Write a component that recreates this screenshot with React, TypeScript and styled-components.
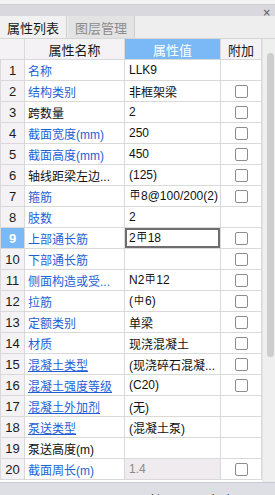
import React from 'react';
import styled, { createGlobalStyle } from 'styled-components';

const GlobalStyle = createGlobalStyle`
  html, body {
    margin: 0;
    padding: 0;
    background: #ffffff;
  }
  body {
    font-family: 'Liberation Sans', 'Noto Sans CJK SC', sans-serif;
    font-size: 12px;
    color: #111111;
  }
`;

const Panel = styled.div`
  width: 275px;
  height: 495px;
  display: flex;
  flex-direction: column;
  overflow: hidden;
  background: #f2f2f2;
`;

const TitleBar = styled.div`
  height: 12px;
  margin-top: 4px;
  background: #d8d8de;
  display: flex;
  justify-content: flex-end;
  align-items: center;
  padding-right: 4px;
  border-top: 1px solid #cfcfd6;
  box-sizing: border-box;
`;

const CloseGlyph = styled.span`
  font-family: 'DejaVu Sans', sans-serif;
  font-size: 10px;
  line-height: 10px;
  color: #555555;
  margin-top: 4px;
`;

const TabBar = styled.div`
  height: 23px;
  display: flex;
  background: #eeeeee;
  border-bottom: 1px solid #d6d6d6;
  box-sizing: border-box;
`;

const Tab = styled.div<{ $active?: boolean }>`
  width: 66px;
  display: flex;
  align-items: center;
  justify-content: center;
  font-size: 13px;
  color: ${(p) => (p.$active ? '#1a1a1a' : '#8c8c8c')};
  background: ${(p) => (p.$active ? '#f1f1f1' : '#e3e3e3')};
  border-right: 1px solid #cfcfcf;
  margin-right: 1px;
`;

const Body = styled.div`
  display: flex;
  height: 443px;
`;

const Grid = styled.div`
  width: 262px;
  display: grid;
  grid-template-columns: 25px 100px 96px 41px;
  grid-auto-rows: 21px;
  background: #ffffff;
  align-content: start;
`;

const HeadCell = styled.div<{ $blue?: boolean }>`
  display: flex;
  align-items: center;
  justify-content: center;
  font-size: 13px;
  background: ${(p) => (p.$blue ? '#7bb8f6' : '#f4f2f4')};
  color: ${(p) => (p.$blue ? '#ffffff' : '#1a1a1a')};
  border-right: 1px solid #d9d9d9;
  border-bottom: 1px solid #d9d9d9;
  box-sizing: border-box;
`;

const NumCell = styled.div<{ $selected?: boolean }>`
  display: flex;
  align-items: center;
  justify-content: center;
  font-size: 13px;
  background: ${(p) => (p.$selected ? '#7bb8f6' : '#f4f2f4')};
  color: ${(p) => (p.$selected ? '#ffffff' : '#1a1a1a')};
  font-weight: ${(p) => (p.$selected ? 'bold' : 'normal')};
  border-right: 1px solid #d9d9d9;
  border-bottom: 1px solid #d9d9d9;
  border-left: 1px solid #d9d9d9;
  box-sizing: border-box;
`;

const NameCell = styled.div<{ $link?: boolean; $under?: boolean }>`
  display: flex;
  align-items: center;
  padding-left: 3px;
  white-space: nowrap;
  overflow: hidden;
  color: ${(p) => (p.$link ? '#1f5fd6' : '#111111')};
  text-decoration: ${(p) => (p.$under ? 'underline' : 'none')};
  border-right: 1px solid #d9d9d9;
  border-bottom: 1px solid #d9d9d9;
  box-sizing: border-box;
`;

const ValueCell = styled.div<{ $readonly?: boolean; $editing?: boolean }>`
  display: flex;
  align-items: center;
  padding-left: 4px;
  white-space: nowrap;
  overflow: hidden;
  color: ${(p) => (p.$readonly ? '#8a8a8a' : '#111111')};
  background: ${(p) => (p.$readonly ? '#efebef' : '#ffffff')};
  border-right: 1px solid #d9d9d9;
  border-bottom: 1px solid #d9d9d9;
  box-sizing: border-box;
  ${(p) => (p.$editing ? 'box-shadow: inset 0 0 0 2px #6e6e6e;' : '')}
`;

const ExtraCell = styled.div`
  display: flex;
  align-items: center;
  justify-content: center;
  border-bottom: 1px solid #d9d9d9;
  border-right: 1px solid #d9d9d9;
  box-sizing: border-box;
`;

const CheckBox = styled.span`
  width: 13px;
  height: 13px;
  border: 1px solid #8c8c8c;
  border-radius: 2px;
  background: #ffffff;
  box-sizing: border-box;
`;

const Rebar = styled.span<{ $grade: number }>`
  display: inline-block;
  position: relative;
  font-size: 10px;
  line-height: 10px;
  margin: 0 1px;
  vertical-align: 1px;
  ${(p) =>
    p.$grade > 1
      ? `&::before { content: ''; position: absolute; left: 1px; right: 1px; top: -1px; height: 1px; background: #222; }`
      : ''}
`;

const ScrollTrack = styled.div`
  width: 13px;
  background: #efefef;
  padding: 14px 2px 0 4px;
  box-sizing: border-box;
  border-left: 1px solid #e4e4e4;
`;

const ScrollThumb = styled.div`
  width: 7px;
  height: 304px;
  border-radius: 4px;
  background: #cdcdcd;
`;

const StatusBar = styled.div`
  flex: 1;
  background: #dedee5;
  border-top: 1px solid #c9c9d0;
  display: flex;
  gap: 26px;
  padding: 8px 0 0 137px;
  white-space: nowrap;
  overflow: hidden;
  font-size: 12px;
  color: #222222;
`;

type Row = {
  name: string;
  link: boolean;
  under?: boolean;
  value: React.ReactNode;
  check: boolean;
  readonly?: boolean;
};

const S = ({ g }: { g: number }) => <Rebar $grade={g}>中</Rebar>;

const rows: Row[] = [
  { name: '名称', link: true, value: 'LLK9', check: false },
  { name: '结构类别', link: true, value: '非框架梁', check: true },
  { name: '跨数量', link: false, value: '2', check: true },
  { name: '截面宽度(mm)', link: true, value: '250', check: true },
  { name: '截面高度(mm)', link: true, value: '450', check: true },
  { name: '轴线距梁左边...', link: false, value: '(125)', check: true },
  { name: '箍筋', link: true, value: <><S g={3} />8@100/200(2)</>, check: true },
  { name: '肢数', link: true, value: '2', check: false },
  { name: '上部通长筋', link: true, value: <>2<S g={3} />18</>, check: true },
  { name: '下部通长筋', link: true, value: '', check: true },
  { name: '侧面构造或受...', link: true, value: <>N2<S g={3} />12</>, check: true },
  { name: '拉筋', link: true, value: <>(<S g={1} />6)</>, check: true },
  { name: '定额类别', link: true, value: '单梁', check: true },
  { name: '材质', link: true, value: '现浇混凝土', check: true },
  { name: '混凝土类型', link: true, under: true, value: '(现浇碎石混凝...', check: true },
  { name: '混凝土强度等级', link: true, under: true, value: '(C20)', check: true },
  { name: '混凝土外加剂', link: true, under: true, value: '(无)', check: false },
  { name: '泵送类型', link: true, under: true, value: '(混凝土泵)', check: false },
  { name: '泵送高度(m)', link: false, value: '', check: false },
  { name: '截面周长(m)', link: true, value: '1.4', check: true, readonly: true },
];

const SELECTED = 9;

const App = () => {
  return (
    <Panel>
      <GlobalStyle />
      <TitleBar>
        <CloseGlyph>×</CloseGlyph>
      </TitleBar>
      <TabBar>
        <Tab $active>属性列表</Tab>
        <Tab>图层管理</Tab>
      </TabBar>
      <Body>
        <Grid>
          <HeadCell />
          <HeadCell>属性名称</HeadCell>
          <HeadCell $blue>属性值</HeadCell>
          <HeadCell>附加</HeadCell>
          {rows.map((r, i) => (
            <React.Fragment key={i}>
              <NumCell $selected={i + 1 === SELECTED}>{i + 1}</NumCell>
              <NameCell $link={r.link} $under={r.under}>
                {r.name}
              </NameCell>
              <ValueCell $readonly={r.readonly} $editing={i + 1 === SELECTED}>
                {r.value}
              </ValueCell>
              <ExtraCell>{r.check && <CheckBox />}</ExtraCell>
            </React.Fragment>
          ))}
        </Grid>
        <ScrollTrack>
          <ScrollThumb />
        </ScrollTrack>
      </Body>
      <StatusBar>
        <span>周长: 1.4</span>
        <span>标高: 0.0</span>
      </StatusBar>
    </Panel>
  );
};

export default App;
